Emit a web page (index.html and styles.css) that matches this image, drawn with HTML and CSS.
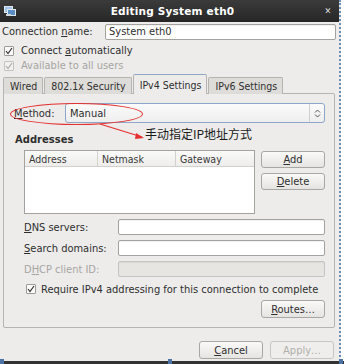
FILE: index.html
```html
<!DOCTYPE html>
<html lang="en">
<head>
    <meta charset="UTF-8">
    <title>Editing System eth0</title>
    <link rel="stylesheet" href="styles.css">
</head>
<body>
    <div class="window">
        <div class="titlebar">
            <svg class="app-icon" width="12" height="11" viewBox="0 0 12 11">
                <rect x="0.5" y="0.5" width="8" height="6" fill="#9fc3e6" stroke="#dfe8f0"/>
                <rect x="3.5" y="3.5" width="8" height="6" fill="#5d8fc4" stroke="#dfe8f0"/>
                <rect x="2" y="8" width="5" height="2" fill="#cfd6dc"/>
            </svg>
            <span class="title">Editing System eth0</span>
            <span class="close">✕</span>
        </div>

        <div class="content">
            <div class="name-row">
                <label class="name-label">Connection <u>n</u>ame:</label>
                <input class="field name-field" type="text" value="System eth0">
            </div>

            <div class="check-row first-check">
                <span class="check"><svg width="8" height="8" viewBox="0 0 8 8"><path d="M1 4 L3 6.5 L7 1" fill="none" stroke="#333" stroke-width="1.2"/></svg></span>
                <span>Connect <u>a</u>utomatically</span>
            </div>
            <div class="check-row disabled">
                <span class="check"><svg width="8" height="8" viewBox="0 0 8 8"><path d="M1 4 L3 6.5 L7 1" fill="none" stroke="#aaa" stroke-width="1.2"/></svg></span>
                <span>Available to all users</span>
            </div>

            <div class="tabs">
                <span class="tab">Wired</span>
                <span class="tab">802.1x Security</span>
                <span class="tab active">IPv4 Settings</span>
                <span class="tab">IPv6 Settings</span>
            </div>

            <div class="panel">
                <div class="method-row">
                    <label class="method-label"><u>M</u>ethod:</label>
                    <div class="combo">
                        <span class="combo-value">Manual</span>
                        <span class="combo-arrows">
                            <svg width="7" height="9" viewBox="0 0 7 9"><path d="M1 3.5 L3.5 1 L6 3.5 M1 5.5 L3.5 8 L6 5.5" fill="none" stroke="#555" stroke-width="1"/></svg>
                        </span>
                    </div>
                </div>

                <div class="section-title">Addresses</div>

                <div class="addresses">
                    <div class="table">
                        <div class="table-head">
                            <span class="col col-address">Address</span>
                            <span class="col col-netmask">Netmask</span>
                            <span class="col col-gateway">Gateway</span>
                        </div>
                    </div>
                    <div class="side-buttons">
                        <button class="btn"><u>A</u>dd</button>
                        <button class="btn"><u>D</u>elete</button>
                    </div>
                </div>

                <div class="form-row">
                    <label class="form-label"><u>D</u>NS servers:</label>
                    <input class="field form-field" type="text">
                </div>
                <div class="form-row">
                    <label class="form-label"><u>S</u>earch domains:</label>
                    <input class="field form-field" type="text">
                </div>
                <div class="form-row disabled">
                    <label class="form-label">D<u>H</u>CP client ID:</label>
                    <input class="field form-field" type="text" disabled>
                </div>

                <div class="check-row require-row">
                    <span class="check"><svg width="8" height="8" viewBox="0 0 8 8"><path d="M1 4 L3 6.5 L7 1" fill="none" stroke="#333" stroke-width="1.2"/></svg></span>
                    <span>Require IPv4 addressing for this connection to complete</span>
                </div>

                <div class="routes-row">
                    <button class="btn"><u>R</u>outes…</button>
                </div>
            </div>

            <div class="footer">
                <button class="btn footer-btn"><u>C</u>ancel</button>
                <button class="btn footer-btn" disabled>Apply…</button>
            </div>
        </div>

        <div class="note">
            <div class="note-ellipse"></div>
            <svg class="note-arrow" width="50" height="20" viewBox="0 0 50 20">
                <path d="M2 2 L44 15" stroke="#e53030" stroke-width="1.2" fill="none"/>
                <path d="M38 11 L46 16 L37 17 Z" fill="#e53030"/>
            </svg>
            <span class="note-text">手动指定IP地址方式</span>
        </div>
    </div>
    <div class="bottom-bar">
        <span class="handle handle-left"></span>
        <span class="handle handle-mid"></span>
        <span class="handle handle-right"></span>
    </div>
</body>
</html>
```

FILE: styles.css
```css
body, html {
    margin: 0;
    padding: 0;
    background: #ffffff;
    font-family: "DejaVu Sans Condensed", "DejaVu Sans", sans-serif;
    font-size: 10.5px;
    color: #2e2e2e;
}

u {
    text-decoration: underline;
    text-underline-offset: 1px;
}

.window {
    position: relative;
    width: 339px;
    height: 361px;
    background: #edeceb;
    border-right: 2px dotted #6f8fb8;
}

.titlebar {
    height: 22px;
    display: flex;
    align-items: center;
    padding: 0 4px;
    background: linear-gradient(#3b3b3b, #262626);
    color: #ffffff;
}

.app-icon {
    flex: none;
}

.title {
    flex: 1;
    text-align: center;
    font-family: "DejaVu Sans", sans-serif;
    font-weight: bold;
    font-size: 10.5px;
    letter-spacing: 0.2px;
    padding-left: 8px;
}

.close {
    flex: none;
    width: 14px;
    text-align: center;
    font-size: 9px;
    color: #dddddd;
}

.content {
    padding: 1px 3px 0 2px;
}

.name-row {
    display: flex;
    align-items: center;
    height: 17px;
}

.name-label {
    width: 103px;
    font-size: 11px;
}

.field {
    box-sizing: border-box;
    height: 16px;
    border: 1px solid #a4a29e;
    border-radius: 2px;
    background: #ffffff;
    font-family: "DejaVu Sans Condensed", "DejaVu Sans", sans-serif;
    font-size: 11px;
    color: #2e2e2e;
    padding: 0 3px;
    margin: 0;
    box-shadow: inset 0 1px 1px rgba(0, 0, 0, 0.06);
}

.name-field {
    width: 231px;
}

.check-row {
    display: flex;
    align-items: center;
    height: 15px;
    font-size: 11px;
    padding-left: 2px;
}

.first-check {
    margin-top: 3px;
}

.check {
    box-sizing: border-box;
    width: 10px;
    height: 10px;
    border: 1px solid #9c9a96;
    border-radius: 1px;
    background: #fafafa;
    display: flex;
    align-items: center;
    justify-content: center;
    margin-right: 7px;
}

.disabled {
    color: #a7a5a1;
}

.disabled .check {
    border-color: #c4c2be;
    background: #f2f1ef;
}

.tabs {
    display: flex;
    align-items: flex-end;
    height: 20px;
    margin-top: 1px;
    padding-left: 1px;
    position: relative;
    z-index: 1;
}

.tab {
    box-sizing: border-box;
    height: 17px;
    padding: 2px 5px 0 6px;
    border: 1px solid #b6b4b0;
    border-bottom: none;
    border-radius: 2px 2px 0 0;
    background: #dedcd8;
    font-size: 10.5px;
    margin-right: 1px;
}

.tab.active {
    height: 20px;
    padding-top: 4px;
    background: #edeceb;
    border-top-color: #8ea7c8;
}

.panel {
    box-sizing: border-box;
    width: 332px;
    height: 235px;
    margin-left: 1px;
    margin-top: -1px;
    border: 1px solid #b6b4b0;
    border-radius: 0 2px 2px 2px;
    padding: 9px 9px 0 10px;
}

.method-row {
    display: flex;
    align-items: center;
    height: 20px;
}

.method-label {
    width: 51px;
    font-size: 11px;
}

.combo {
    box-sizing: border-box;
    width: 260px;
    height: 20px;
    border: 1px solid #8ca6c8;
    border-radius: 3px;
    background: linear-gradient(#fbfbfb, #eeeeee);
    display: flex;
    align-items: center;
    font-size: 11px;
}

.combo-value {
    flex: 1;
    padding-left: 4px;
}

.combo-arrows {
    width: 14px;
    height: 18px;
    border-left: 1px solid #d0d0d0;
    display: flex;
    align-items: center;
    justify-content: center;
}

.section-title {
    font-family: "DejaVu Sans", sans-serif;
    font-weight: bold;
    font-size: 10px;
    margin-top: 11px;
    height: 15px;
    padding-left: 1px;
}

.addresses {
    display: flex;
    gap: 6px;
    margin-left: 10px;
    margin-top: 1px;
    height: 64px;
}

.table {
    box-sizing: border-box;
    width: 231px;
    height: 64px;
    border: 1px solid #a4a29e;
    background: #ffffff;
}

.table-head {
    display: flex;
    height: 15px;
    border-bottom: 1px solid #d3d1cd;
    background: linear-gradient(#fafafa, #eeedeb);
    font-size: 10.5px;
    color: #3a3a3a;
}

.col {
    box-sizing: border-box;
    display: flex;
    align-items: center;
    padding-left: 4px;
    border-right: 1px solid #d3d1cd;
}

.col-address {
    width: 73px;
}

.col-netmask {
    width: 78px;
}

.col-gateway {
    flex: 1;
    border-right: none;
}

.side-buttons {
    display: flex;
    flex-direction: column;
    gap: 5px;
    padding-top: 1px;
}

.btn {
    box-sizing: border-box;
    width: 64px;
    height: 17px;
    border: 1px solid #a9a7a3;
    border-radius: 3px;
    background: linear-gradient(#f9f9f8, #e6e4e1);
    font-family: "DejaVu Sans Condensed", "DejaVu Sans", sans-serif;
    font-size: 11px;
    color: #2e2e2e;
    padding: 0;
}

.btn:disabled {
    color: #b0aeaa;
    border-color: #c8c6c2;
    background: #efeeec;
}

.form-row {
    display: flex;
    align-items: center;
    height: 16px;
    margin-top: 5px;
    padding-left: 10px;
    font-size: 11px;
}

.form-label {
    width: 94px;
}

.form-field {
    width: 207px;
}

.form-field:disabled {
    background: #e6e5e2;
    border-color: #c6c4c0;
}

.require-row {
    margin-top: 6px;
    padding-left: 12px;
    height: 12px;
}

.require-row .check {
    margin-right: 5px;
}

.routes-row {
    display: flex;
    justify-content: flex-end;
    margin-top: 5px;
}

.routes-row .btn {
    height: 18px;
}

.footer {
    display: flex;
    justify-content: flex-end;
    gap: 7px;
    margin-top: 13px;
    padding-right: 2px;
}

.footer-btn {
    width: 64px;
    height: 18px;
}

.note {
    position: absolute;
    left: 0;
    top: 0;
    pointer-events: none;
}

.note-ellipse {
    position: absolute;
    left: 10px;
    top: 103px;
    width: 131px;
    height: 20px;
    border: 1.5px solid #e53030;
    border-radius: 50%;
}

.note-arrow {
    position: absolute;
    left: 98px;
    top: 122px;
}

.note-text {
    position: absolute;
    left: 145px;
    top: 125px;
    font-family: "Noto Sans CJK SC", sans-serif;
    font-size: 12px;
    color: #1a1a1a;
    white-space: nowrap;
}

.bottom-bar {
    position: relative;
    height: 3px;
    background: #333333;
    width: 344px;
}

.handle {
    position: absolute;
    top: -2px;
    width: 4px;
    height: 5px;
    background: #4d72a6;
}

.handle-left {
    left: 0;
}

.handle-mid {
    left: 168px;
}

.handle-right {
    left: 339px;
}
```
